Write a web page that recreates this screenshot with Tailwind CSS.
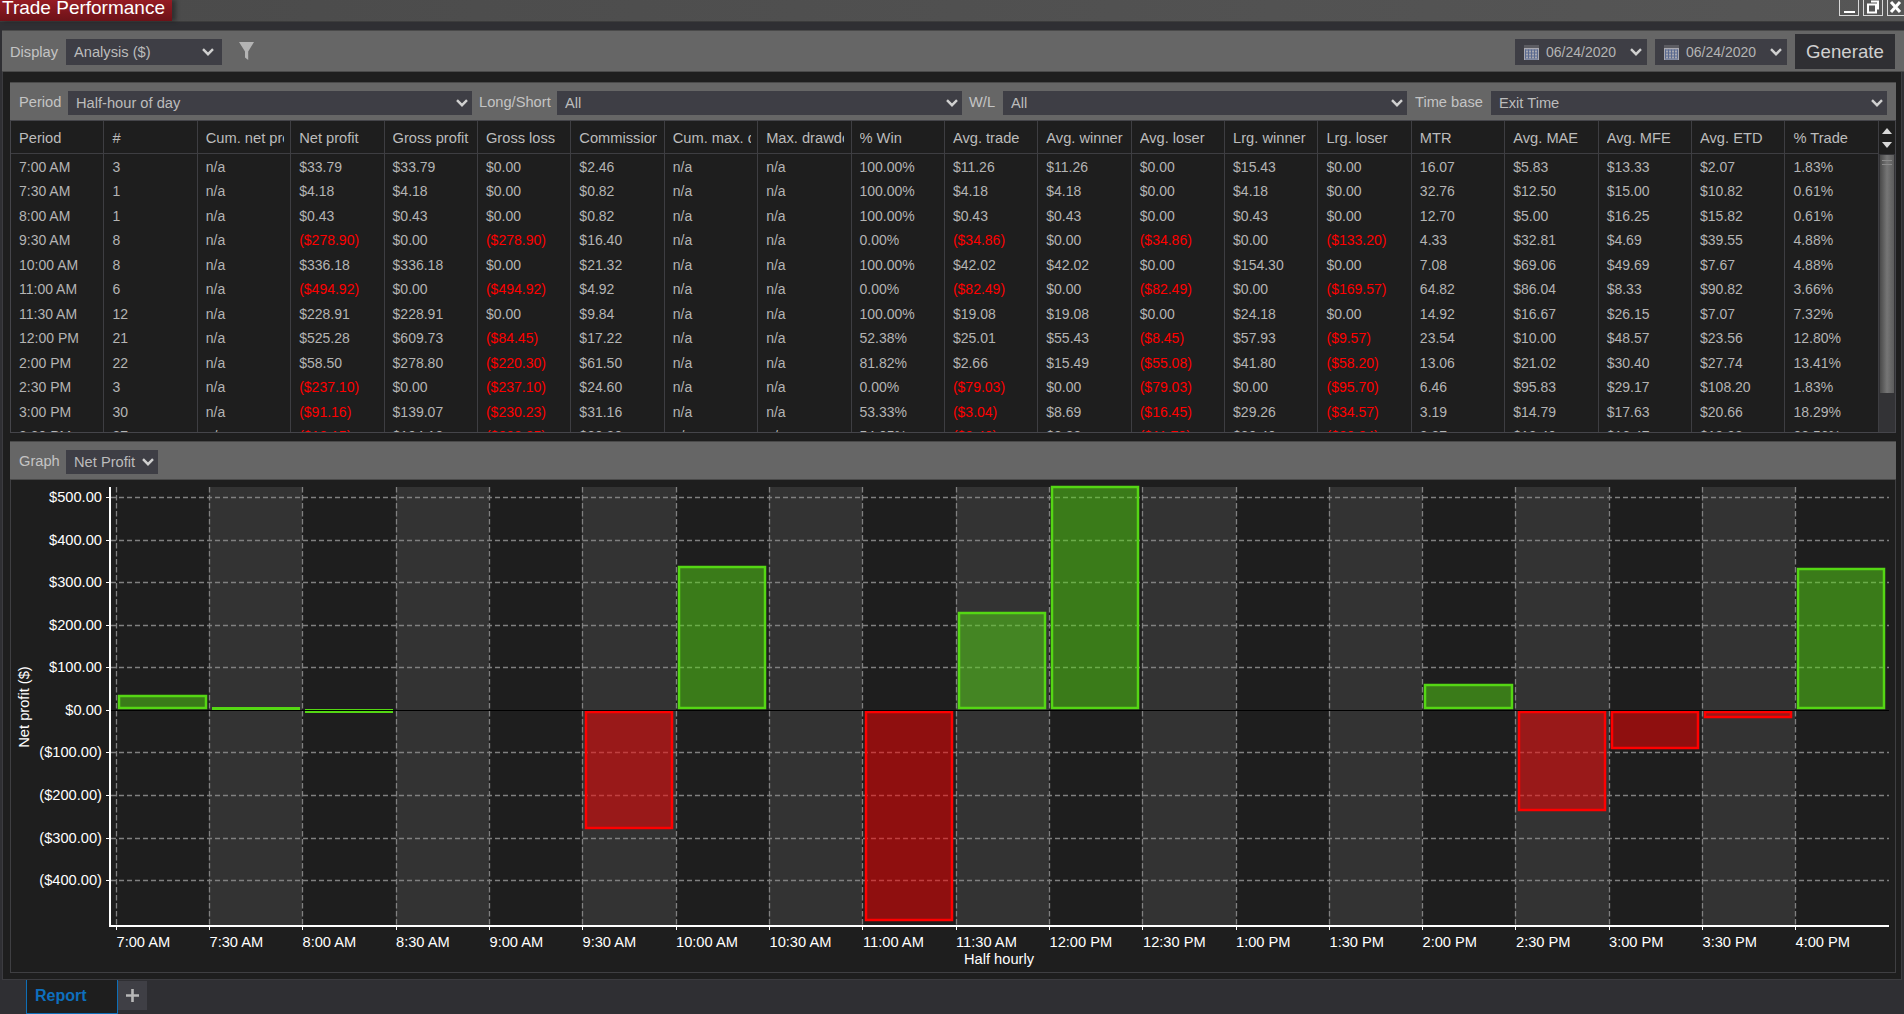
<!DOCTYPE html>
<html lang="en">
<head>
<meta charset="utf-8">
<title>Trade Performance</title>
<script src="https://cdn.jsdelivr.net/npm/@tailwindcss/browser@4"></script>
</head>
<body class="w-[1904px] h-[1014px] overflow-hidden bg-[#2f2f33] font-['Liberation_Sans',Arial,sans-serif] text-[14px] text-[#b4b4b4]">
<div class="flex flex-col h-[1014px]">

  <!-- title bar -->
  <header class="h-[22px] flex justify-between items-start bg-gradient-to-r from-[#4a4a4a] to-[#565656] border-b border-[#3c3c3c]">
    <div class="w-[172px] h-[21px] bg-gradient-to-b from-[#961c24] to-[#6c1218] shadow-[4px_0_4px_rgba(0,0,0,0.35)] text-white text-[19px] leading-[15px] pl-[2px] overflow-hidden">Trade Performance</div>
    <div class="flex gap-[4px] pr-0">
      <div class="w-[20px] h-[16px] border border-t-0 border-[#d8d8d8] flex items-end justify-center pb-[2px]"><div class="w-[11px] h-[2px] bg-white"></div></div>
      <div class="w-[20px] h-[16px] border border-t-0 border-[#d8d8d8]">
        <svg width="18" height="15" viewBox="0 0 18 15"><path d="M7 1.5h7v7h-2M4 4.5h8v8H4z" fill="none" stroke="#fff" stroke-width="2"/></svg>
      </div>
      <div class="w-[17px] h-[16px] border border-t-0 border-r-0 border-[#d8d8d8]">
        <svg width="16" height="15" viewBox="0 0 16 15"><path d="M3 2l9 10M12 2l-9 10" fill="none" stroke="#fff" stroke-width="3"/></svg>
      </div>
    </div>
  </header>
  <div class="h-[8px]"></div>

  <!-- toolbar -->
  <div class="ml-[2px] h-[42px] shrink-0 bg-[#666666] border-t border-b border-[#4a4a4a] flex items-center pl-[8px] pr-[9px] text-[14.67px] text-[#c4c4c4]">
    <span class="w-[56px] mt-[1px]">Display</span>
    <div class="w-[156px] h-[26px] bg-[#3e3e45] flex items-center justify-between pl-[8px] pr-[8px] text-[#bcbcbc] mt-[2px]">
      <span>Analysis ($)</span>
      <svg width="12" height="8" viewBox="0 0 12 8"><path d="M1 1.2l5 5 5-5" fill="none" stroke="#d0d0d0" stroke-width="2.4"/></svg>
    </div>
    <svg class="ml-[17px]" width="15" height="19" viewBox="0 0 15 19"><path d="M0 0h15L9.2 9.5V18L6 15.5v-6z" fill="#b4b4b4"/></svg>
    <div class="ml-auto w-[132px] h-[26px] bg-[#3e3e45] flex items-center pl-[9px] pr-[5px] text-[14px] text-[#b4b4b4] mt-[2px]">
      <svg width="15" height="15" viewBox="0 0 15 15"><rect width="15" height="15" fill="#a8a8b0"/><rect x="0" y="0" width="15" height="3" fill="#5c5c62"/><path d="M1.5 4.5v9M4.5 4.5v9M7.5 4.5v9M10.5 4.5v9M13.5 4.5v9M1 5h13M1 8h13M1 11h13M1 14h13" stroke="#5a6a90" stroke-width="1" fill="none"/></svg>
      <span class="ml-[7px]">06/24/2020</span>
      <svg class="ml-auto" width="12" height="8" viewBox="0 0 12 8"><path d="M1 1.2l5 5 5-5" fill="none" stroke="#d0d0d0" stroke-width="2.4"/></svg>
    </div>
    <div class="ml-[8px] w-[132px] h-[26px] bg-[#3e3e45] flex items-center pl-[9px] pr-[5px] text-[14px] text-[#b4b4b4] mt-[2px]">
      <svg width="15" height="15" viewBox="0 0 15 15"><rect width="15" height="15" fill="#a8a8b0"/><rect x="0" y="0" width="15" height="3" fill="#5c5c62"/><path d="M1.5 4.5v9M4.5 4.5v9M7.5 4.5v9M10.5 4.5v9M13.5 4.5v9M1 5h13M1 8h13M1 11h13M1 14h13" stroke="#5a6a90" stroke-width="1" fill="none"/></svg>
      <span class="ml-[7px]">06/24/2020</span>
      <svg class="ml-auto" width="12" height="8" viewBox="0 0 12 8"><path d="M1 1.2l5 5 5-5" fill="none" stroke="#d0d0d0" stroke-width="2.4"/></svg>
    </div>
    <div class="ml-[8px] w-[100px] h-[35px] mt-[1px] bg-[#2f2f33] flex items-center justify-center text-[18.67px] text-[#d0d0d0]">Generate</div>
  </div>

  <!-- main area -->
  <main class="mx-[2px] h-[908px] shrink-0 bg-[#1e1e1e] border-l border-r border-b border-[#3c3c40] pl-[7px] pr-[5px] pt-[10px] flex flex-col">

    <!-- filter row -->
    <div class="h-[38px] shrink-0 bg-[#666666] border-t border-[#4a4a4a] flex items-center pl-[9px] text-[14.67px] text-[#c4c4c4]">
      <span class="w-[49px]">Period</span>
      <div class="w-[404px] h-[24px] mt-[2px] bg-[#3e3e45] flex items-center justify-between pl-[8px] pr-[4px] text-[#bcbcbc]"><span>Half-hour of day</span><svg width="12" height="8" viewBox="0 0 12 8"><path d="M1 1.2l5 5 5-5" fill="none" stroke="#d0d0d0" stroke-width="2.4"/></svg></div>
      <span class="ml-[7px] w-[78px]">Long/Short</span>
      <div class="w-[405px] h-[24px] mt-[2px] bg-[#3e3e45] flex items-center justify-between pl-[8px] pr-[4px] text-[#bcbcbc]"><span>All</span><svg width="12" height="8" viewBox="0 0 12 8"><path d="M1 1.2l5 5 5-5" fill="none" stroke="#d0d0d0" stroke-width="2.4"/></svg></div>
      <span class="ml-[7px] w-[34px]">W/L</span>
      <div class="w-[404px] h-[24px] mt-[2px] bg-[#3e3e45] flex items-center justify-between pl-[8px] pr-[4px] text-[#bcbcbc]"><span>All</span><svg width="12" height="8" viewBox="0 0 12 8"><path d="M1 1.2l5 5 5-5" fill="none" stroke="#d0d0d0" stroke-width="2.4"/></svg></div>
      <span class="ml-[8px] w-[76px]">Time base</span>
      <div class="w-[396px] h-[24px] mt-[2px] bg-[#3e3e45] flex items-center justify-between pl-[8px] pr-[4px] text-[#bcbcbc]"><span>Exit Time</span><svg width="12" height="8" viewBox="0 0 12 8"><path d="M1 1.2l5 5 5-5" fill="none" stroke="#d0d0d0" stroke-width="2.4"/></svg></div>
    </div>

    <!-- table -->
    <div class="h-[313px] shrink-0 flex border-t border-l border-r border-b border-[#45454a] overflow-hidden">
      <div class="w-[1868px] shrink-0">
        <div class="h-[33px] grid grid-cols-[repeat(20,93.4px)] border-b border-[#3e3e42] text-[14.67px] text-[#bcbcbc] leading-[34px] [&>div]:pl-[8px] [&>div]:border-r [&>div]:border-[#3e3e42] [&_p]:w-[78px] [&_p]:overflow-hidden [&_p]:whitespace-nowrap">
          <div><p>Period</p></div><div><p>#</p></div><div><p>Cum. net profit</p></div><div><p>Net profit</p></div><div><p>Gross profit</p></div><div><p>Gross loss</p></div><div><p>Commission</p></div><div><p>Cum. max. drawdown</p></div><div><p>Max. drawdown</p></div><div><p>% Win</p></div><div><p>Avg. trade</p></div><div><p>Avg. winner</p></div><div><p>Avg. loser</p></div><div><p>Lrg. winner</p></div><div><p>Lrg. loser</p></div><div><p>MTR</p></div><div><p>Avg. MAE</p></div><div><p>Avg. MFE</p></div><div><p>Avg. ETD</p></div><div><p>% Trade</p></div>
        </div>
        <div class="pt-[0.5px] [&>div]:grid [&>div]:grid-cols-[repeat(20,93.4px)] [&>div]:h-[24.5px] [&>div]:leading-[24.5px] [&_span]:pl-[8px] [&_span]:border-r [&_span]:border-[#3e3e42] [&_span]:overflow-hidden [&_span]:whitespace-nowrap">
          <div><span>7:00 AM</span><span>3</span><span>n/a</span><span>$33.79</span><span>$33.79</span><span>$0.00</span><span>$2.46</span><span>n/a</span><span>n/a</span><span>100.00%</span><span>$11.26</span><span>$11.26</span><span>$0.00</span><span>$15.43</span><span>$0.00</span><span>16.07</span><span>$5.83</span><span>$13.33</span><span>$2.07</span><span>1.83%</span></div>
          <div><span>7:30 AM</span><span>1</span><span>n/a</span><span>$4.18</span><span>$4.18</span><span>$0.00</span><span>$0.82</span><span>n/a</span><span>n/a</span><span>100.00%</span><span>$4.18</span><span>$4.18</span><span>$0.00</span><span>$4.18</span><span>$0.00</span><span>32.76</span><span>$12.50</span><span>$15.00</span><span>$10.82</span><span>0.61%</span></div>
          <div><span>8:00 AM</span><span>1</span><span>n/a</span><span>$0.43</span><span>$0.43</span><span>$0.00</span><span>$0.82</span><span>n/a</span><span>n/a</span><span>100.00%</span><span>$0.43</span><span>$0.43</span><span>$0.00</span><span>$0.43</span><span>$0.00</span><span>12.70</span><span>$5.00</span><span>$16.25</span><span>$15.82</span><span>0.61%</span></div>
          <div><span>9:30 AM</span><span>8</span><span>n/a</span><span class="text-[#f00]">($278.90)</span><span>$0.00</span><span class="text-[#f00]">($278.90)</span><span>$16.40</span><span>n/a</span><span>n/a</span><span>0.00%</span><span class="text-[#f00]">($34.86)</span><span>$0.00</span><span class="text-[#f00]">($34.86)</span><span>$0.00</span><span class="text-[#f00]">($133.20)</span><span>4.33</span><span>$32.81</span><span>$4.69</span><span>$39.55</span><span>4.88%</span></div>
          <div><span>10:00 AM</span><span>8</span><span>n/a</span><span>$336.18</span><span>$336.18</span><span>$0.00</span><span>$21.32</span><span>n/a</span><span>n/a</span><span>100.00%</span><span>$42.02</span><span>$42.02</span><span>$0.00</span><span>$154.30</span><span>$0.00</span><span>7.08</span><span>$69.06</span><span>$49.69</span><span>$7.67</span><span>4.88%</span></div>
          <div><span>11:00 AM</span><span>6</span><span>n/a</span><span class="text-[#f00]">($494.92)</span><span>$0.00</span><span class="text-[#f00]">($494.92)</span><span>$4.92</span><span>n/a</span><span>n/a</span><span>0.00%</span><span class="text-[#f00]">($82.49)</span><span>$0.00</span><span class="text-[#f00]">($82.49)</span><span>$0.00</span><span class="text-[#f00]">($169.57)</span><span>64.82</span><span>$86.04</span><span>$8.33</span><span>$90.82</span><span>3.66%</span></div>
          <div><span>11:30 AM</span><span>12</span><span>n/a</span><span>$228.91</span><span>$228.91</span><span>$0.00</span><span>$9.84</span><span>n/a</span><span>n/a</span><span>100.00%</span><span>$19.08</span><span>$19.08</span><span>$0.00</span><span>$24.18</span><span>$0.00</span><span>14.92</span><span>$16.67</span><span>$26.15</span><span>$7.07</span><span>7.32%</span></div>
          <div><span>12:00 PM</span><span>21</span><span>n/a</span><span>$525.28</span><span>$609.73</span><span class="text-[#f00]">($84.45)</span><span>$17.22</span><span>n/a</span><span>n/a</span><span>52.38%</span><span>$25.01</span><span>$55.43</span><span class="text-[#f00]">($8.45)</span><span>$57.93</span><span class="text-[#f00]">($9.57)</span><span>23.54</span><span>$10.00</span><span>$48.57</span><span>$23.56</span><span>12.80%</span></div>
          <div><span>2:00 PM</span><span>22</span><span>n/a</span><span>$58.50</span><span>$278.80</span><span class="text-[#f00]">($220.30)</span><span>$61.50</span><span>n/a</span><span>n/a</span><span>81.82%</span><span>$2.66</span><span>$15.49</span><span class="text-[#f00]">($55.08)</span><span>$41.80</span><span class="text-[#f00]">($58.20)</span><span>13.06</span><span>$21.02</span><span>$30.40</span><span>$27.74</span><span>13.41%</span></div>
          <div><span>2:30 PM</span><span>3</span><span>n/a</span><span class="text-[#f00]">($237.10)</span><span>$0.00</span><span class="text-[#f00]">($237.10)</span><span>$24.60</span><span>n/a</span><span>n/a</span><span>0.00%</span><span class="text-[#f00]">($79.03)</span><span>$0.00</span><span class="text-[#f00]">($79.03)</span><span>$0.00</span><span class="text-[#f00]">($95.70)</span><span>6.46</span><span>$95.83</span><span>$29.17</span><span>$108.20</span><span>1.83%</span></div>
          <div><span>3:00 PM</span><span>30</span><span>n/a</span><span class="text-[#f00]">($91.16)</span><span>$139.07</span><span class="text-[#f00]">($230.23)</span><span>$31.16</span><span>n/a</span><span>n/a</span><span>53.33%</span><span class="text-[#f00]">($3.04)</span><span>$8.69</span><span class="text-[#f00]">($16.45)</span><span>$29.26</span><span class="text-[#f00]">($34.57)</span><span>3.19</span><span>$14.79</span><span>$17.63</span><span>$20.66</span><span>18.29%</span></div>
          <div><span>3:30 PM</span><span>37</span><span>n/a</span><span class="text-[#f00]">($13.15)</span><span>$194.10</span><span class="text-[#f00]">($203.25)</span><span>$30.30</span><span>n/a</span><span>n/a</span><span>54.05%</span><span class="text-[#f00]">($0.40)</span><span>$8.88</span><span class="text-[#f00]">($11.70)</span><span>$30.40</span><span class="text-[#f00]">($30.84)</span><span>2.87</span><span>$12.40</span><span>$16.47</span><span>$19.92</span><span>22.56%</span></div>
        </div>
      </div>
      <!-- scrollbar -->
      <div class="w-[16px] shrink-0 flex flex-col">
        <div class="h-[33px] shrink-0 flex flex-col items-center justify-center gap-[8px]">
          <svg width="10" height="6" viewBox="0 0 10 6"><path d="M0 6L5 0l5 6z" fill="#d8d8d8"/></svg>
          <svg width="10" height="6" viewBox="0 0 10 6"><path d="M0 0h10L5 6z" fill="#d8d8d8"/></svg>
        </div>
        <div class="flex-1 bg-[#333336] pt-[1px]">
          <div class="h-[238px] w-[14px] ml-[1px] bg-gradient-to-r from-[#4a4a4a] via-[#767676] to-[#5c5c5c] pt-[5px]">
            <div class="h-[1px] mb-[3px] mx-[2px] bg-[#8a8a8a]"></div>
            <div class="h-[1px] mx-[2px] bg-[#8a8a8a]"></div>
          </div>
        </div>
      </div>
    </div>

    <div class="h-[8px] shrink-0"></div>

    <!-- graph header -->
    <div class="h-[39px] shrink-0 bg-[#666666] border-t border-b border-[#4a4a4a] flex items-center pl-[9px] text-[14.67px] text-[#c4c4c4]">
      <span class="w-[47px]">Graph</span>
      <div class="w-[92px] h-[24px] mt-[2px] bg-[#3e3e45] flex items-center justify-between pl-[8px] pr-[4px] text-[#bcbcbc]"><span>Net Profit</span><svg width="12" height="8" viewBox="0 0 12 8"><path d="M1 1.2l5 5 5-5" fill="none" stroke="#d0d0d0" stroke-width="2.4"/></svg></div>
    </div>

    <!-- chart -->
    <div class="h-[493px] shrink-0 border-l border-r border-b border-[#3f3f42]">
      <svg class="block" width="1884" height="492" viewBox="11 480 1884 492" fill="white" font-size="14.67">
        <g fill="#333333">
          <rect x="209" y="487" width="93" height="438"/><rect x="396" y="487" width="93" height="438"/><rect x="582" y="487" width="94" height="438"/><rect x="769" y="487" width="93" height="438"/><rect x="956" y="487" width="93" height="438"/><rect x="1142" y="487" width="94" height="438"/><rect x="1329" y="487" width="93" height="438"/><rect x="1515" y="487" width="94" height="438"/><rect x="1702" y="487" width="93" height="438"/>
        </g>
        <path d="M111 497.5H1889M111 540.5H1889M111 582.5H1889M111 625.5H1889M111 667.5H1889M111 752.5H1889M111 795.5H1889M111 838.5H1889M111 880.5H1889" stroke="#808080" stroke-width="1.3" stroke-dasharray="5 3" fill="none"/>
        <path d="M116.5 487V925M209.5 487V925M302.5 487V925M396.5 487V925M489.5 487V925M582.5 487V925M676.5 487V925M769.5 487V925M862.5 487V925M956.5 487V925M1049.5 487V925M1142.5 487V925M1236.5 487V925M1329.5 487V925M1422.5 487V925M1515.5 487V925M1609.5 487V925M1702.5 487V925M1795.5 487V925" stroke="#808080" stroke-width="1.3" stroke-dasharray="5.5 2.5" fill="none"/>

        <g fill="rgb(85,215,20)" fill-opacity="0.5" stroke="rgb(85,215,20)" stroke-width="2.5">
          <rect x="119" y="696" width="87" height="12"/>
          <rect x="679" y="567" width="86" height="141"/>
          <rect x="959" y="613" width="86" height="95"/>
          <rect x="1052" y="487" width="86" height="221"/>
          <rect x="1425" y="685" width="87" height="23"/>
          <rect x="1798" y="569" width="86" height="139"/>
        </g>
        <rect x="212" y="707" width="88" height="3" fill="rgb(85,215,20)"/>
        <rect x="305" y="709" width="88" height="4" fill="rgb(85,215,20)"/>
        <g fill="rgb(255,0,0)" fill-opacity="0.5" stroke="rgb(255,0,0)" stroke-width="2.5">
          <rect x="586" y="712" width="86" height="116"/>
          <rect x="866" y="712" width="86" height="208"/>
          <rect x="1519" y="712" width="86" height="98"/>
          <rect x="1612" y="712" width="86" height="36"/>
          <rect x="1705" y="712" width="86" height="5"/>
        </g>
        <rect x="111" y="710" width="1778" height="1" fill="#000000"/>

        <rect x="109" y="487" width="2" height="440" fill="#ffffff"/>
        <rect x="109" y="925" width="1780" height="2" fill="#ffffff"/>
        <path d="M106 497.5h3M106 540.5h3M106 582.5h3M106 625.5h3M106 667.5h3M106 710.5h3M106 752.5h3M106 795.5h3M106 838.5h3M106 880.5h3M116.5 927v3M209.5 927v3M302.5 927v3M396.5 927v3M489.5 927v3M582.5 927v3M676.5 927v3M769.5 927v3M862.5 927v3M956.5 927v3M1049.5 927v3M1142.5 927v3M1236.5 927v3M1329.5 927v3M1422.5 927v3M1515.5 927v3M1609.5 927v3M1702.5 927v3M1795.5 927v3" stroke="#ffffff" stroke-width="1" fill="none"/>

        <g text-anchor="end">
          <text x="102" y="502">$500.00</text><text x="102" y="545">$400.00</text><text x="102" y="587">$300.00</text><text x="102" y="630">$200.00</text><text x="102" y="672">$100.00</text><text x="102" y="715">$0.00</text><text x="102" y="757">($100.00)</text><text x="102" y="800">($200.00)</text><text x="102" y="843">($300.00)</text><text x="102" y="885">($400.00)</text>
        </g>
        <g>
          <text x="116.5" y="947">7:00 AM</text><text x="209.5" y="947">7:30 AM</text><text x="302.5" y="947">8:00 AM</text><text x="396" y="947">8:30 AM</text><text x="489.5" y="947">9:00 AM</text><text x="582.5" y="947">9:30 AM</text><text x="676" y="947">10:00 AM</text><text x="769.5" y="947">10:30 AM</text><text x="863" y="947">11:00 AM</text><text x="956" y="947">11:30 AM</text><text x="1049.5" y="947">12:00 PM</text><text x="1143" y="947">12:30 PM</text><text x="1236" y="947">1:00 PM</text><text x="1329.5" y="947">1:30 PM</text><text x="1422.5" y="947">2:00 PM</text><text x="1516" y="947">2:30 PM</text><text x="1609" y="947">3:00 PM</text><text x="1702.5" y="947">3:30 PM</text><text x="1795.5" y="947">4:00 PM</text>
        </g>
        <text x="999" y="964" text-anchor="middle">Half hourly</text>
        <text transform="translate(29 707) rotate(-90)" text-anchor="middle">Net profit ($)</text>
      </svg>
    </div>
  </main>

  <!-- tab strip -->
  <footer class="h-[34px] shrink-0 flex items-start pl-[26px]">
    <div class="w-[92px] h-[34px] bg-[#1e1e1e] border-l border-r border-b border-[#0e6fb8] pl-[8px] leading-[31px] text-[16px] font-bold text-[#0e6fbd]">Report</div>
    <div class="w-[29px] h-[29px] mt-[1px] bg-[#3f3f45] flex items-center justify-center">
      <svg width="13" height="13" viewBox="0 0 13 13"><path d="M6.5 0v13M0 6.5h13" stroke="#b8b8b8" stroke-width="2.6"/></svg>
    </div>
  </footer>
</div>
</body>
</html>
